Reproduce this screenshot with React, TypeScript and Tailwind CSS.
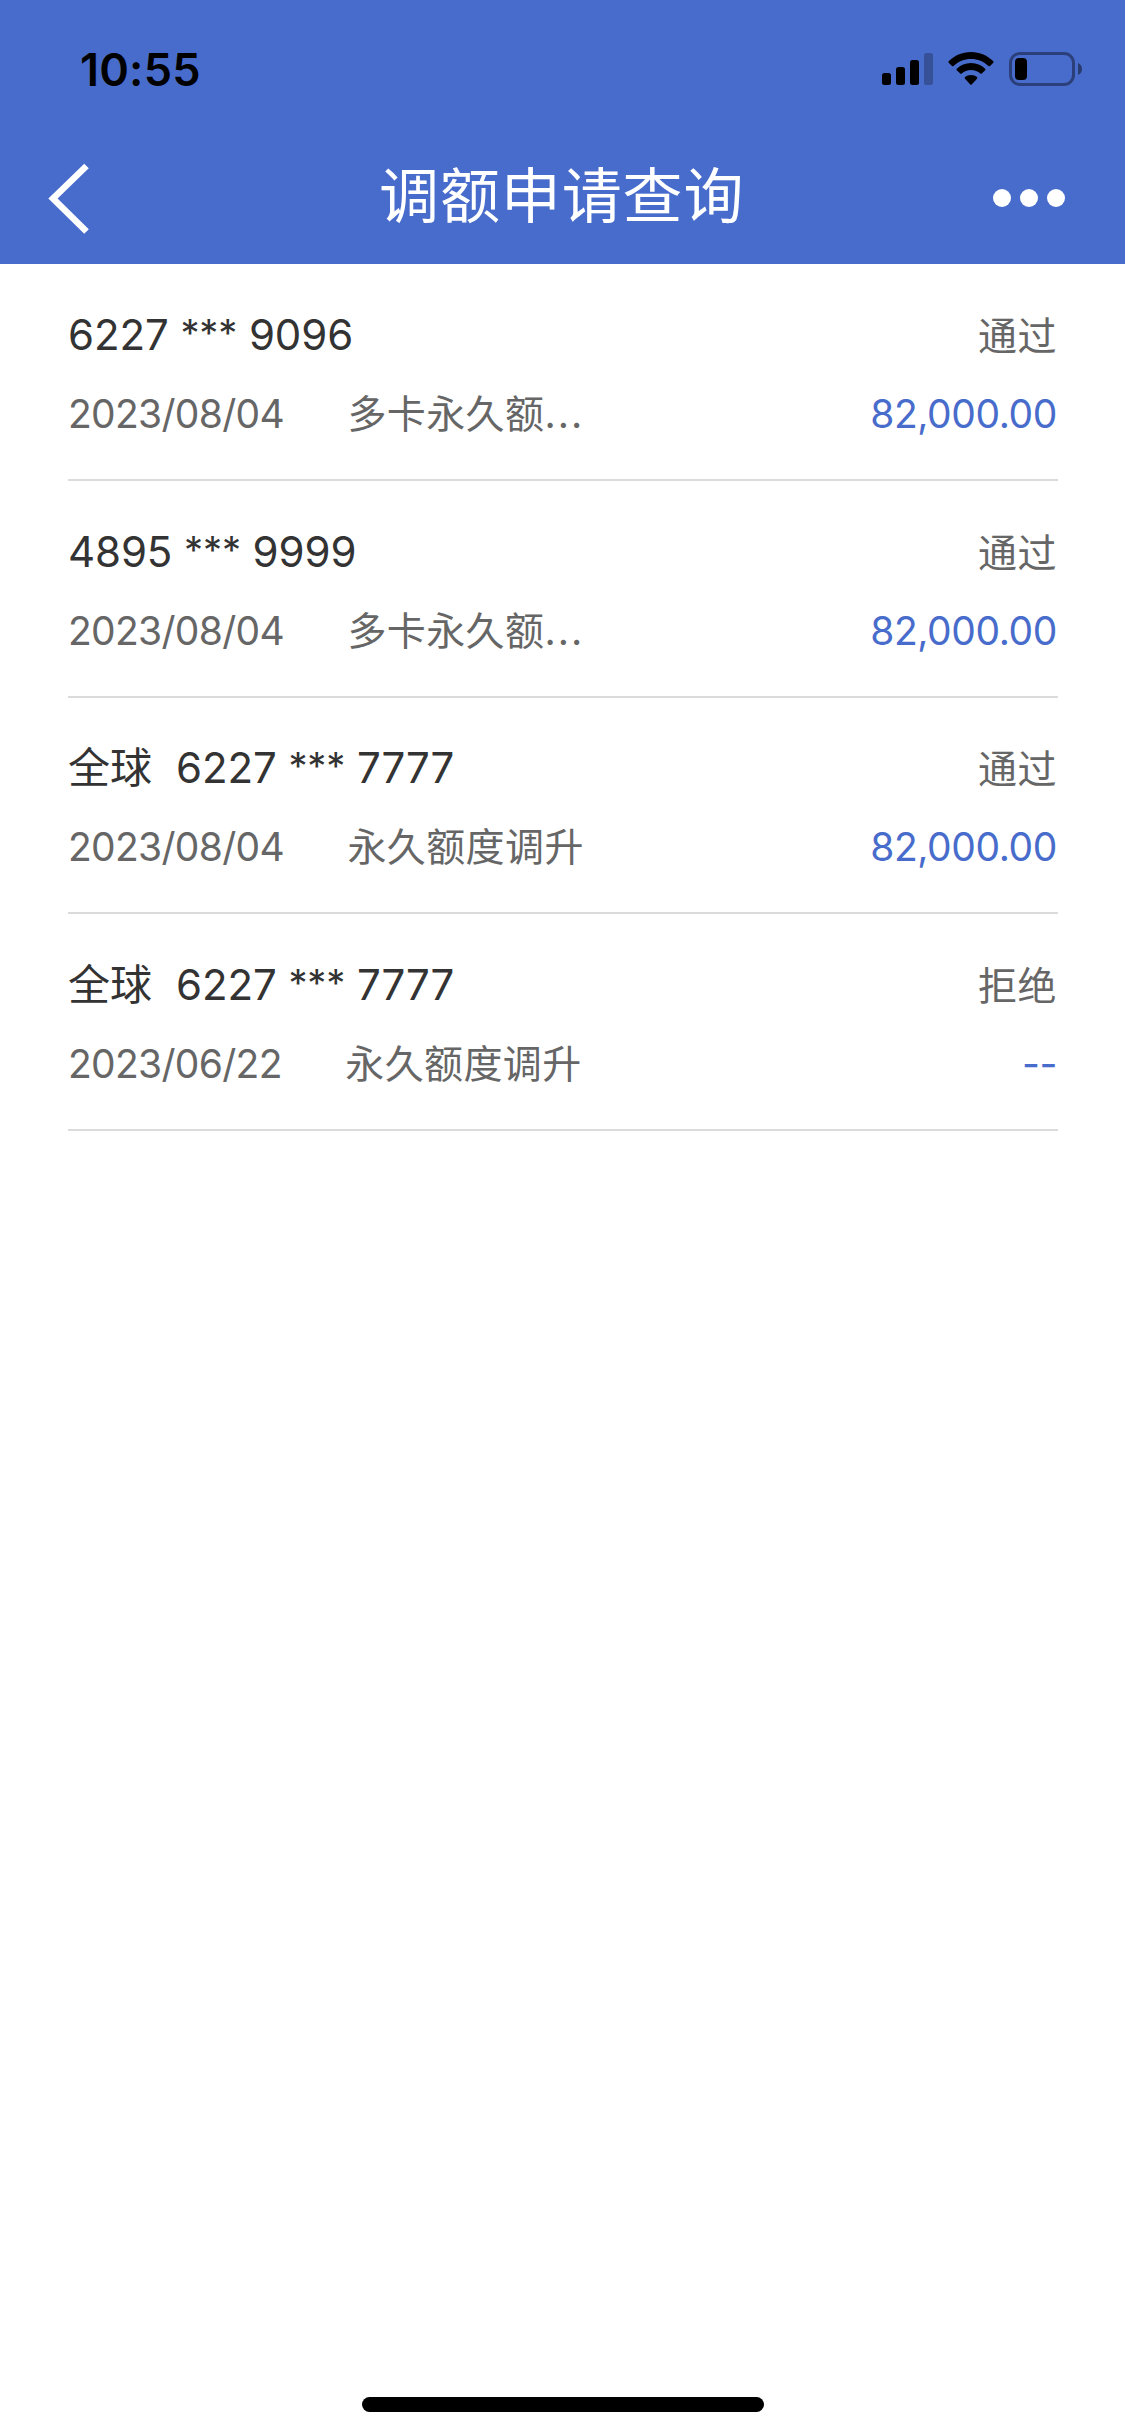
type QuotaRecord = {
    id: number;
    prefix?: string;
    head: string;
    tail: string;
    date: string;
    type: string;
    clipped?: boolean;
    status: string;
    amount: string;
};

const records: QuotaRecord[] = [
    { id: 1, head: "6227", tail: "9096", date: "2023/08/04", type: "多卡永久额", clipped: true, status: "通过", amount: "82,000.00" },
    { id: 2, head: "4895", tail: "9999", date: "2023/08/04", type: "多卡永久额", clipped: true, status: "通过", amount: "82,000.00" },
    { id: 3, prefix: "全球", head: "6227", tail: "7777", date: "2023/08/04", type: "永久额度调升", status: "通过", amount: "82,000.00" },
    { id: 4, prefix: "全球", head: "6227", tail: "7777", date: "2023/06/22", type: "永久额度调升", status: "拒绝", amount: "--" },
];

const StatusBar = () => {
    return (
        <div className="flex h-[138px] items-center justify-between pl-[80px] pr-[43px]">
            <div className="text-[45px] font-semibold leading-none tracking-[0.2px] text-black">10:55</div>

            <div className="flex items-center">
                {/* Signal */}
                <svg className="h-[34px] w-[51px]" viewBox="0 0 51 34">
                    <rect x="0" y="21" width="9" height="12" rx="2.5" />
                    <rect x="14" y="15" width="9" height="18" rx="2.5" />
                    <rect x="28" y="8" width="9" height="25" rx="2.5" />
                    <rect x="42" y="1" width="9" height="32" rx="2.5" fillOpacity="0.25" />
                </svg>

                {/* Wifi */}
                <svg className="ml-[15px] h-[34px] w-[46px]" viewBox="0 0 46 34">
                    <path d="M23 0C32 0 39.500 3.600 45.300 9.200Q46 10 45.300 10.700L42 14Q41.300 14.700 40.500 14C35.700 9.600 29.800 7 23 7S10.300 9.600 5.500 14Q4.700 14.700 4 14L.7 10.700Q0 10 .7 9.200C6.500 3.600 14 0 23 0Z" />
                    <path d="M23 11C28.500 11 33.500 13.200 37.200 16.700Q37.900 17.400 37.200 18.200L33.800 21.500Q33.100 22.200 32.300 21.500C29.800 19.200 26.600 18 23 18S16.200 19.200 13.700 21.500Q12.900 22.200 12.200 21.500L8.800 18.200Q8.100 17.400 8.800 16.700C12.500 13.200 17.500 11 23 11Z" />
                    <path d="M23 23C25.500 23 27.500 23.800 29 25.100Q29.700 25.900 29 26.700L23.700 32.500Q23 33.200 22.300 32.500L17 26.700Q16.300 25.900 17 25.100C18.500 23.800 20.500 23 23 23Z" />
                </svg>

                {/* Battery */}
                <svg className="ml-[15px] h-[34px] w-[73px]" viewBox="0 0 73 34">
                    <rect x="1.500" y="1.500" width="63" height="31" rx="9.500" fill="none" stroke="#000" strokeWidth="3" strokeOpacity="0.4" />
                    <rect x="6" y="6" width="12" height="22" rx="4" />
                    <path d="M69 11C71.500 12 73 14.300 73 17S71.500 22 69 23Z" fillOpacity="0.45" />
                </svg>
            </div>
        </div>
    );
};

const NavBar = () => {
    return (
        <nav className="flex h-[126px] items-start pl-[48px] pr-[60px] text-white">
            <button className="mt-[25px] w-[72px]" aria-label="返回">
                <svg className="h-[72px] w-[42px]" viewBox="0 0 42 72" fill="none" stroke="currentColor" strokeWidth="6.500">
                    <path d="M38.500 3L5 35.500L38.500 68.500" />
                </svg>
            </button>
            <h1 className="ml-[259px] mt-[28px] text-[60px] leading-[60px] tracking-[0.9px]">调额申请查询</h1>
            <button className="ml-auto mt-[51px] flex gap-[9px]" aria-label="更多">
                <span className="size-[18px] rounded-full bg-white"></span>
                <span className="size-[18px] rounded-full bg-white"></span>
                <span className="size-[18px] rounded-full bg-white"></span>
            </button>
        </nav>
    );
};

const RecordItem = ({ record }: { record: QuotaRecord }) => {
    return (
        <li className="h-[216.67px] border-b-2 border-[#dbdbdb] pt-[40.500px]">
            <div className="flex h-[60px] justify-between leading-[60px]">
                <div className="flex text-[42px] text-[#333333]">
                    {record.prefix && <span className="mr-[24px]">{record.prefix}</span>}
                    <span className="tracking-[-0.1px]">
                        {record.head} <span className="align-[3px] text-[38px] leading-none">***</span> {record.tail}
                    </span>
                </div>
                <span className="mr-px mt-px text-[39px] tracking-[0.5px] text-[#666666]">{record.status}</span>
            </div>
            <div className="mt-[19px] flex h-[60px] text-[39px] leading-[60px] text-[#666666]">
                <span className="tracking-[-0.7px]">{record.date}</span>
                <span className="ml-[63.500px] tracking-[0.4px]">
                    {record.type}
                    {record.clipped && <span className="tracking-[2px]">...</span>}
                </span>
                <span className="ml-auto mr-px tracking-[-0.4px] text-[#486ccb]">{record.amount}</span>
            </div>
        </li>
    );
};

export default function App() {
    return (
        <div className="flex h-[2436px] w-[1125px] flex-col bg-white font-['Inter','Noto_Sans_CJK_SC',sans-serif]">
            <header className="bg-[#486ccb]">
                <StatusBar />
                <NavBar />
            </header>

            <ul className="flex-1 pl-[68px] pr-[67px] pt-[0.4px]">
                {records.map((record) => (
                    <RecordItem key={record.id} record={record} />
                ))}
            </ul>

            {/* Home indicator */}
            <div className="mx-auto mb-[24px] h-[15px] w-[402px] rounded-full bg-black"></div>
        </div>
    );
}
